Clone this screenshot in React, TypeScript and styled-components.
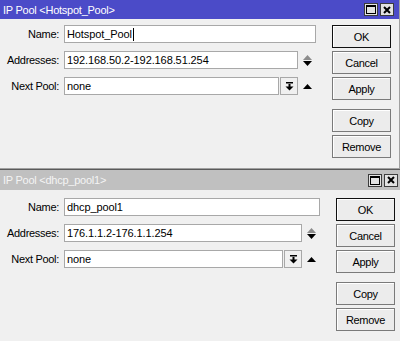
import React from "react";
import styled, { createGlobalStyle } from "styled-components";

const GlobalStyle = createGlobalStyle`
  html, body {
    margin: 0;
    padding: 0;
    background: #f0f0f0;
  }
  body {
    width: 400px;
    height: 341px;
    overflow: hidden;
    font-family: "Liberation Sans", Arial, sans-serif;
    font-size: 11px;
    color: #000;
  }
`;

const Screen = styled.div`
  width: 400px;
  height: 341px;
  overflow: hidden;
  display: flex;
  flex-direction: column;
`;

const Window = styled.div<{ $active?: boolean }>`
  flex: none;
  width: ${(p) => (p.$active ? 399 : 403)}px;
  background: #f0f0f0;
  border-right: 1px solid #a0a0a0;
  border-top: ${(p) => (p.$active ? "none" : "1px solid #5a5a5a")};
  border-bottom: ${(p) => (p.$active ? "1px solid #a0a0a0" : "none")};
  height: ${(p) => (p.$active ? 168 : 172)}px;
`;

const TitleBar = styled.div<{ $active?: boolean; $h: number }>`
  height: ${(p) => p.$h}px;
  background: ${(p) => (p.$active ? "#4b4bc8" : "#c0c0c0")};
  color: ${(p) => (p.$active ? "#ffffff" : "#f4f4f4")};
  display: flex;
  align-items: center;
  justify-content: space-between;
  padding: 0 5px 0 3px;
  letter-spacing: -0.25px;
`;

const TitleText = styled.span`
  white-space: nowrap;
`;

const TitleButtons = styled.div`
  display: flex;
  gap: 2px;
`;

const TitleButton = styled.div`
  width: 14px;
  height: 13px;
  box-sizing: border-box;
  border: 1px solid #3c3c3c;
  background: #e2e2e2;
  display: flex;
  align-items: center;
  justify-content: center;
`;

const Body = styled.div<{ $top: number }>`
  display: flex;
  padding: ${(p) => p.$top}px 8px 0 0;
`;

const Form = styled.div`
  flex: 1;
  display: flex;
  flex-direction: column;
  gap: 8px;
`;

const Row = styled.div`
  display: flex;
  align-items: center;
  height: 18px;
`;

const Label = styled.div`
  width: 59px;
  margin-right: 5px;
  text-align: right;
  white-space: nowrap;
  letter-spacing: -0.3px;
`;

const Field = styled.div`
  flex: 1;
  height: 18px;
  box-sizing: border-box;
  border: 1px solid #a8a8a8;
  background: #ffffff;
  padding: 0 2px;
  display: flex;
  align-items: center;
  white-space: nowrap;
  overflow: hidden;
  letter-spacing: -0.1px;
`;

const Caret = styled.span`
  display: inline-block;
  width: 1px;
  height: 13px;
  background: #000;
  margin-left: 1px;
`;

const Side = styled.div`
  width: 18px;
  height: 18px;
  flex: none;
  display: flex;
  flex-direction: column;
  align-items: center;
  justify-content: center;
  gap: 1px;
`;

const DropButton = styled.div`
  width: 18px;
  height: 18px;
  flex: none;
  box-sizing: border-box;
  margin-left: 1px;
  border: 1px solid #a8a8a8;
  background: #f0f0f0;
  display: flex;
  align-items: center;
  justify-content: center;
`;

const Buttons = styled.div`
  width: 59px;
  margin-left: 16px;
  display: flex;
  flex-direction: column;
  gap: 3px;
`;

const Button = styled.div<{ $default?: boolean; $gapTop?: boolean }>`
  height: 23px;
  box-sizing: border-box;
  border: 1px solid ${(p) => (p.$default ? "#101010" : "#7a7a7a")};
  box-shadow: inset 1px 1px 0 #ffffff;
  background: #ececec;
  display: flex;
  align-items: center;
  justify-content: center;
  margin-top: ${(p) => (p.$gapTop ? 6 : 0)}px;
  letter-spacing: -0.3px;
`;

const Triangle = ({ up, color }: { up?: boolean; color: string }) => (
  <svg width="9" height="5" viewBox="0 0 9 5">
    <polygon points={up ? "4.5,0 9,5 0,5" : "0,0 9,0 4.5,5"} fill={color} />
  </svg>
);

const DownToBar = () => (
  <svg width="9" height="9" viewBox="0 0 9 9">
    <rect x="1" y="0" width="7" height="1.5" fill="#000" />
    <rect x="3.5" y="2" width="2" height="3" fill="#000" />
    <polygon points="0.5,4.5 8.5,4.5 4.5,8.5" fill="#000" />
  </svg>
);

const MaxIcon = () => (
  <svg width="10" height="9" viewBox="0 0 10 9">
    <rect x="0.5" y="0.5" width="9" height="8" fill="none" stroke="#000" />
    <rect x="0" y="0" width="10" height="2" fill="#000" />
  </svg>
);

const CloseIcon = () => (
  <svg width="8" height="8" viewBox="0 0 8 8">
    <path d="M1 1 L7 7 M7 1 L1 7" stroke="#000" strokeWidth="2" />
  </svg>
);

interface PoolWindowProps {
  name: string;
  addresses: string;
  active?: boolean;
}

const PoolWindow = ({ name, addresses, active }: PoolWindowProps) => (
  <Window $active={active}>
    <TitleBar $active={active} $h={active ? 19 : 20}>
      <TitleText>IP Pool &lt;{name}&gt;</TitleText>
      <TitleButtons>
        <TitleButton>
          <MaxIcon />
        </TitleButton>
        <TitleButton>
          <CloseIcon />
        </TitleButton>
      </TitleButtons>
    </TitleBar>
    <Body $top={active ? 6 : 8}>
      <Form>
        <Row>
          <Label>Name:</Label>
          <Field>
            {name}
            {active && <Caret />}
          </Field>
        </Row>
        <Row>
          <Label>Addresses:</Label>
          <Field>{addresses}</Field>
          <Side>
            <Triangle up color="#8c8c8c" />
            <Triangle color="#000" />
          </Side>
        </Row>
        <Row>
          <Label>Next Pool:</Label>
          <Field>none</Field>
          <DropButton>
            <DownToBar />
          </DropButton>
          <Side>
            <Triangle up color="#000" />
          </Side>
        </Row>
      </Form>
      <Buttons>
        <Button $default>OK</Button>
        <Button>Cancel</Button>
        <Button>Apply</Button>
        <Button $gapTop>Copy</Button>
        <Button>Remove</Button>
      </Buttons>
    </Body>
  </Window>
);

const App = () => (
  <>
    <GlobalStyle />
    <Screen>
      <PoolWindow name="Hotspot_Pool" addresses="192.168.50.2-192.168.51.254" active />
      <PoolWindow name="dhcp_pool1" addresses="176.1.1.2-176.1.1.254" />
    </Screen>
  </>
);

export default App;
